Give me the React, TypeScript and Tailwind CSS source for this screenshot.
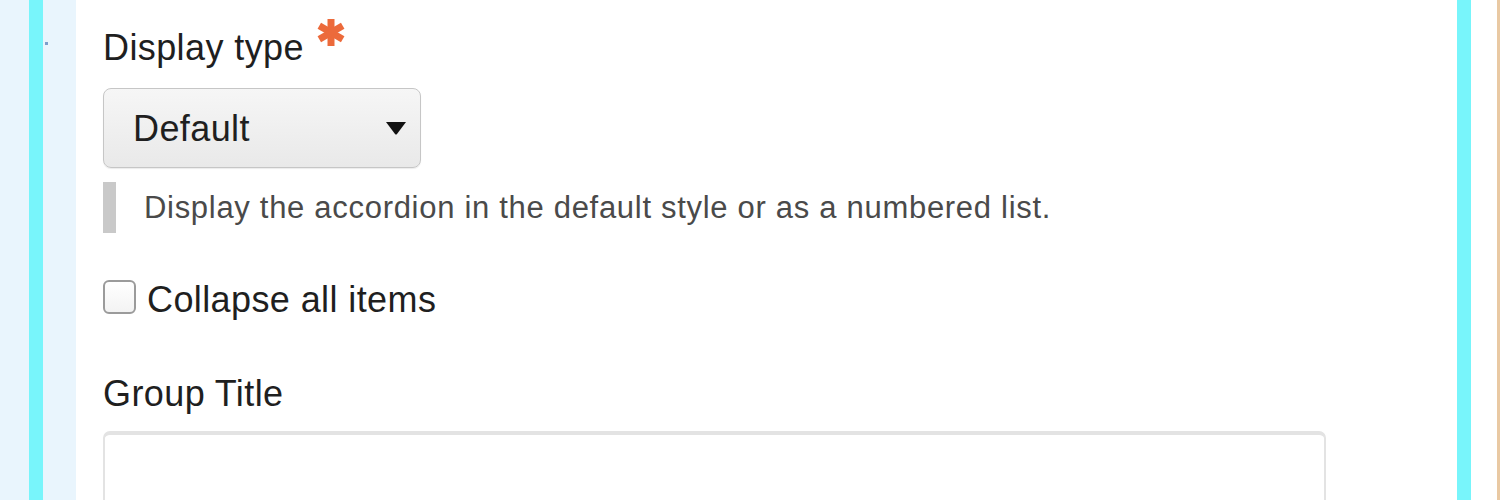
import React from "react";

export default function App() {
  const font = { fontFamily: '"Liberation Sans", Arial, Helvetica, sans-serif' };
  return (
    <div className="w-[1500px] h-[500px] flex overflow-hidden bg-white" style={font}>
      <div className="w-[29px] shrink-0 bg-[#e9f5fd]" />
      <div className="w-[14px] shrink-0 bg-[#78f5fb]" />
      <div className="w-[33px] shrink-0 bg-[#e9f5fd] pt-[42px] pl-[2px]">
        <div className="w-[3px] h-[3px] bg-[#7c9ecb]" />
      </div>
      <div className="flex-1 min-h-0 overflow-hidden bg-white pl-[27px] pt-[27px] flex flex-col items-start">
        <div className="flex items-start shrink-0">
          <span className="text-[36px] leading-[41px] tracking-[0.4px] text-[#1f1f1f]">Display type</span>
          <svg width="32" height="29" viewBox="0 0 32 29" className="ml-[11px] -mt-[9px]">
            <g stroke="#ec6a3b" strokeWidth="7" strokeLinecap="butt">
              <line x1="16" y1="1" x2="16" y2="28" />
              <line x1="4.3" y1="7.75" x2="27.7" y2="21.25" />
              <line x1="4.3" y1="21.25" x2="27.7" y2="7.75" />
            </g>
          </svg>
        </div>
        <div className="shrink-0 mt-[20px] w-[318px] h-[80px] rounded-[8px] border border-[#c6c6c6] bg-gradient-to-b from-[#f6f6f6] to-[#e9e9e9] shadow-[0_1px_1px_rgba(0,0,0,0.08)] flex items-center justify-between pl-[29px] pr-[13px]">
          <span className="text-[36px] leading-[41px] tracking-[0.4px] text-[#1f1f1f]">Default</span>
          <svg width="22" height="14" viewBox="0 0 22 14">
            <path d="M1 1 L21 1 L12 13 Q11 14 10 13 Z" fill="#111" />
          </svg>
        </div>
        <div className="shrink-0 mt-[14px] flex h-[51px]">
          <div className="w-[13px] h-[51px] bg-[#c9c9c9]" />
          <span className="ml-[28px] text-[31px] leading-[51px] tracking-[0.7px] text-[#4a4a4a]">
            Display the accordion in the default style or as a numbered list.
          </span>
        </div>
        <div className="shrink-0 mt-[46px] flex items-center h-[41px]">
          <div className="w-[33px] h-[34px] rounded-[6px] border-2 border-[#9b9b9b] bg-gradient-to-b from-white to-[#f3f3f3] -mt-[5px]" />
          <span className="ml-[11px] text-[36px] leading-[41px] tracking-[0.4px] text-[#1f1f1f]">Collapse all items</span>
        </div>
        <div className="shrink-0 mt-[53px] text-[36px] leading-[41px] tracking-[0.4px] text-[#1f1f1f]">Group Title</div>
        <div className="mt-[17px] w-[1223px] h-[90px] shrink-0 rounded-[7px] border-2 border-t-[4px] border-[#e3e3e3] bg-white" />
      </div>
      <div className="w-[14px] shrink-0 bg-[#78f5fb]" />
      <div className="w-[26px] shrink-0 bg-white" />
      <div className="w-[3px] shrink-0 bg-[#e9c9a3]" />
    </div>
  );
}
